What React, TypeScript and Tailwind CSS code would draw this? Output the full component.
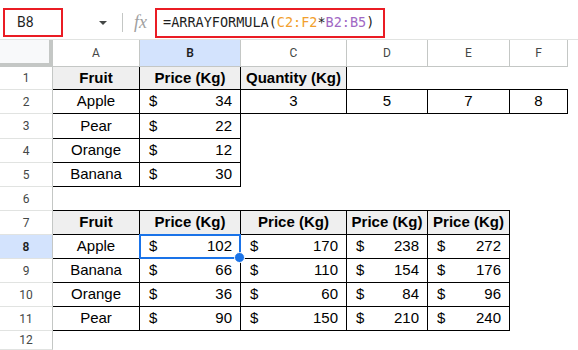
import clsx from "clsx";

type Cell = {
  t?: string;
  k?: "head" | "text" | "money";
  r?: boolean;
  b?: boolean;
  sel?: boolean;
};

const head = (t: string): Cell => ({ t, k: "head", r: true, b: true });
const txt = (t: string): Cell => ({ t, k: "text", r: true, b: true });
const money = (t: string, sel = false): Cell => ({ t, k: "money", r: true, b: true, sel });
const under: Cell = { b: true };
const blank: Cell = {};

const rows: Cell[][] = [
  [head("Fruit"), head("Price (Kg)"), head("Quantity (Kg)"), under, under, under],
  [txt("Apple"), money("34"), txt("3"), txt("5"), txt("7"), txt("8")],
  [txt("Pear"), money("22"), blank, blank, blank, blank],
  [txt("Orange"), money("12"), blank, blank, blank, blank],
  [txt("Banana"), money("30"), blank, blank, blank, blank],
  [under, under, under, under, under, blank],
  [head("Fruit"), head("Price (Kg)"), head("Price (Kg)"), head("Price (Kg)"), head("Price (Kg)"), blank],
  [txt("Apple"), money("102", true), money("170"), money("238"), money("272"), blank],
  [txt("Banana"), money("66"), money("110"), money("154"), money("176"), blank],
  [txt("Orange"), money("36"), money("60"), money("84"), money("96"), blank],
  [txt("Pear"), money("90"), money("150"), money("210"), money("240"), blank],
  [blank, blank, blank, blank, blank, blank],
];

const letters = ["A", "B", "C", "D", "E", "F"];

function SheetCell({ cell }: { cell: Cell }) {
  return (
    <div
      className={clsx(
        "relative flex items-center overflow-visible whitespace-nowrap text-[15px] text-black",
        cell.r && "border-r border-r-black",
        cell.b && "border-b border-b-black",
        cell.k === "head" && "justify-center bg-[#efefef] font-bold",
        cell.k === "text" && "justify-center",
        cell.k === "money" && "justify-between pl-[9px] pr-2"
      )}
    >
      {cell.k === "money" ? (
        <>
          <span>$</span>
          <span>{cell.t}</span>
        </>
      ) : (
        cell.t
      )}
      {cell.sel && (
        <div className="absolute -bottom-px -left-px -right-px -top-px border-2 border-[#1a73e8]">
          <div className="absolute -bottom-[6px] -right-[6px] z-10 h-[11px] w-[11px] rounded-full border border-white bg-[#1a73e8]" />
        </div>
      )}
    </div>
  );
}

export default function App() {
  return (
    <div className="h-[350px] w-[578px] overflow-hidden bg-white font-['Liberation_Sans',Arial,sans-serif]">
      {/* name box + formula bar */}
      <div className="flex h-10 items-center border-b border-[#e1e3e1]">
        <div className="ml-[3px] mt-[5px] flex h-[29px] w-[60px] items-center border-2 border-[#ea1c24] pl-3 font-['Roboto',sans-serif] text-[14px] text-[#1f1f1f]">
          B8
        </div>
        <svg className="ml-[36px] mt-[6px]" width="8" height="4" viewBox="0 0 8 4">
          <path d="M0 0h8L4 4z" fill="#444746" />
        </svg>
        <div className="ml-[15px] mt-[5px] h-[19px] w-px bg-[#c4c7c5]" />
        <span className="ml-[11px] mt-[6px] font-['Liberation_Serif',serif] text-[18px] italic text-[#a0a0a0]">
          fx
        </span>
        <div className="ml-[8px] mt-[6px] flex h-[30px] w-[230px] items-center border-2 border-[#ea1c24] pl-[6px] font-['DejaVu_Sans_Mono',monospace] text-[13.5px] text-[#1f1f1f]">
          =ARRAYFORMULA(<span className="text-[#f29f2d]">C2:F2</span>*
          <span className="text-[#a168c4]">B2:B5</span>)
        </div>
      </div>

      {/* grid */}
      <div className="grid grid-cols-[53px_87px_101px_106px_81px_82px_58px_1fr] grid-rows-[27px_23px_24px_25px_24px_24px_24px_24px_24px_24px_24px_24px_19px]">
        <div className="border-b-4 border-r-4 border-[#c4c7c5] bg-[#f8f9fa]" />
        {letters.map((l) => (
          <div
            key={l}
            className={clsx(
              "flex items-center justify-center border-b border-r border-[#c4c7c5] font-['Roboto',sans-serif] text-[12px]",
              l === "B" ? "bg-[#d3e3fd] font-semibold text-[#1f1f1f]" : "text-[#444746]"
            )}
          >
            {l}
          </div>
        ))}
        <div />

        {rows.map((row, i) => (
          <div key={i} className="contents">
            <div
              className={clsx(
                "flex items-center justify-center border-b border-r border-b-[#e1e3e1] border-r-[#c4c7c5] font-['Roboto',sans-serif] text-[12px]",
                i === 7 ? "bg-[#d3e3fd] font-semibold text-[#1f1f1f]" : "text-[#444746]"
              )}
            >
              {i + 1}
            </div>
            {row.map((c, j) => (
              <SheetCell key={j} cell={c} />
            ))}
            <div />
          </div>
        ))}
      </div>
    </div>
  );
}
